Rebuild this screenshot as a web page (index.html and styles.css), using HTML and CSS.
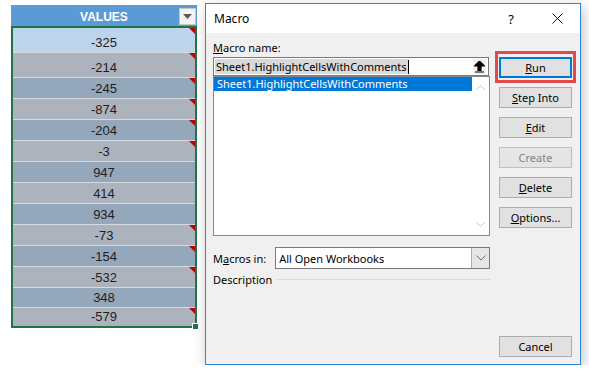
FILE: index.html
```html
<!DOCTYPE html>
<html lang="en">
<head>
  <meta charset="UTF-8">
  <title>Macro</title>
  <link rel="stylesheet" href="styles.css">
</head>
<body>
  <div class="screen">
    <!-- Planilha com os valores -->
    <div class="sheet">
      <div class="sheet-head">
        <span class="head-title">VALUES</span>
        <span class="filter-btn">
          <svg width="9" height="5" viewBox="0 0 9 5"><path d="M0 0h9L4.5 5z" fill="#595959"/></svg>
        </span>
      </div>
      <div class="sheet-body">
        <div class="cell active note" style="height:24px">-325</div>
        <div class="cell grey note" style="height:25px">-214</div>
        <div class="cell blue note">-245</div>
        <div class="cell grey note">-874</div>
        <div class="cell blue note">-204</div>
        <div class="cell grey note">-3</div>
        <div class="cell blue">947</div>
        <div class="cell grey">414</div>
        <div class="cell blue">934</div>
        <div class="cell grey note">-73</div>
        <div class="cell blue note">-154</div>
        <div class="cell grey note">-532</div>
        <div class="cell blue" style="height:20px">348</div>
        <div class="cell grey note" style="height:19px">-579</div>
        <span class="fill-handle"></span>
      </div>
    </div>

    <!-- Janela de macros -->
    <div class="dialog">
      <div class="titlebar">
        <span class="title">Macro</span>
        <span class="tb-btn">?</span>
        <span class="tb-btn">
          <svg width="11" height="11" viewBox="0 0 11 11"><path d="M0.5 0.5l10 10M10.5 0.5l-10 10" stroke="#111" stroke-width="1"/></svg>
        </span>
      </div>
      <div class="dialog-body">
        <div class="main-col">
          <div class="label"><u>M</u>acro name:</div>
          <div class="name-input">
            <span class="name-text">Sheet1.HighlightCellsWithComments</span><span class="caret"></span>
            <span class="up-btn">
              <svg width="11" height="12" viewBox="0 0 11 12"><path d="M5.5 0L10.5 5H7v4.5H4V5H0.5z M1 11h9" fill="#000" stroke="#000" stroke-width="1.2"/></svg>
            </span>
          </div>
          <div class="listbox">
            <div class="list-items">
              <div class="list-item selected">Sheet1.HighlightCellsWithComments</div>
            </div>
            <div class="scroll">
              <svg width="9" height="5" viewBox="0 0 9 5"><path d="M0.5 4.5L4.5 0.8L8.5 4.5" fill="none" stroke="#c4c4c4"/></svg>
              <svg width="9" height="5" viewBox="0 0 9 5"><path d="M0.5 0.5L4.5 4.2L8.5 0.5" fill="none" stroke="#c4c4c4"/></svg>
            </div>
          </div>
          <div class="macros-in">
            <span class="label">M<u>a</u>cros in:</span>
            <div class="select">
              <span class="select-text">All Open Workbooks</span>
              <span class="select-btn">
                <svg width="10" height="6" viewBox="0 0 10 6"><path d="M0.5 0.5L5 5L9.5 0.5" fill="none" stroke="#6d6d6d"/></svg>
              </span>
            </div>
          </div>
          <div class="desc">
            <span class="label">Description</span>
            <span class="desc-line"></span>
          </div>
        </div>
        <div class="btn-col">
          <button class="btn default highlight"><u>R</u>un</button>
          <button class="btn"><u>S</u>tep Into</button>
          <button class="btn"><u>E</u>dit</button>
          <button class="btn disabled">Create</button>
          <button class="btn"><u>D</u>elete</button>
          <button class="btn"><u>O</u>ptions...</button>
          <button class="btn cancel">Cancel</button>
        </div>
      </div>
    </div>
  </div>
</body>
</html>
```

FILE: styles.css
```css
/* Geral */
body {
  margin: 0;
  background: #fff;
  font-family: "Noto Sans", "DejaVu Sans", sans-serif;
  color: #000;
}
.screen {
  display: flex;
  align-items: flex-start;
  padding: 3px 0 0 11px;
}

/* Planilha */
.sheet {
  width: 186px;
  margin-top: 2px;
  font-family: "Liberation Sans", Arial, sans-serif;
}
.sheet-head {
  height: 21px;
  background: #5b9bd5;
  display: flex;
  align-items: center;
  position: relative;
}
.head-title {
  flex: 1;
  text-align: center;
  color: #fff;
  font-weight: bold;
  font-size: 12px;
  padding-top: 2px;
}
.filter-btn {
  position: absolute;
  right: 1px;
  top: 3px;
  width: 15px;
  height: 15px;
  background: #f3f3f3;
  border: 1px solid #c6c6c6;
  display: flex;
  align-items: center;
  justify-content: center;
}
.sheet-body {
  border: 2px solid #217346;
  position: relative;
}
.cell {
  height: 21px;
  box-sizing: border-box;
  display: flex;
  align-items: flex-end;
  justify-content: center;
  padding-bottom: 2px;
  font-size: 13px;
  line-height: 15px;
  color: #1e1e1e;
  border-top: 1px solid #d5dae2;
  position: relative;
}
.cell.active {
  background: #bdd5ec;
  border-top: none;
}
.cell.grey {
  background: #adb3bc;
}
.cell.blue {
  background: #95a7bb;
}
.note::after {
  content: "";
  position: absolute;
  top: 0;
  right: 0;
  border-top: 6px solid #c00000;
  border-left: 6px solid transparent;
}
.fill-handle {
  position: absolute;
  right: -4px;
  bottom: -4px;
  width: 5px;
  height: 5px;
  background: #217346;
  border: 1px solid #fff;
}

/* Janela */
.dialog {
  margin-left: 8px;
  width: 376px;
  height: 362px;
  box-sizing: border-box;
  border: 1px solid #2b88d8;
  background: #f0f0f0;
  box-shadow: 2px 4px 12px rgba(0,0,0,0.25);
  display: flex;
  flex-direction: column;
  font-size: 11px;
}
.titlebar {
  height: 29px;
  background: #fff;
  display: flex;
  align-items: center;
  padding-left: 8px;
}
.title {
  flex: 1;
  font-size: 12px;
}
.tb-btn {
  width: 46px;
  height: 29px;
  display: flex;
  align-items: center;
  justify-content: center;
  font-size: 13px;
}
.dialog-body {
  flex: 1;
  display: flex;
  gap: 9px;
  padding: 7px 7px 7px 7px;
}
.main-col {
  width: 277px;
  display: flex;
  flex-direction: column;
}
.label {
  line-height: 15px;
  color: #000;
}
.name-input {
  margin-top: 2px;
  height: 19px;
  box-sizing: border-box;
  border: 1px solid #7a7a7a;
  background: #fff;
  display: flex;
  align-items: center;
  padding-left: 1px;
  margin-right: 1px;
}
.name-text {
  background: #d9d9d9;
  line-height: 15px;
  padding: 0 1px;
}
.caret {
  width: 1px;
  height: 14px;
  background: #000;
}
.up-btn {
  margin-left: auto;
  margin-right: 2px;
  width: 13px;
  height: 15px;
  background: #f0f0f0;
  display: flex;
  align-items: center;
  justify-content: center;
}
.listbox {
  height: 160px;
  box-sizing: border-box;
  border: 1px solid #828790;
  background: #fff;
  display: flex;
}
.list-items {
  flex: 1;
}
.list-item {
  line-height: 14px;
  padding-left: 3px;
}
.list-item.selected {
  background: #0078d7;
  color: #fff;
}
.scroll {
  width: 17px;
  display: flex;
  flex-direction: column;
  justify-content: space-between;
  align-items: center;
  padding: 8px 0 8px;
}
.macros-in {
  margin-top: 11px;
  display: flex;
  align-items: center;
  gap: 9px;
}
.select {
  flex: 1;
  height: 22px;
  box-sizing: border-box;
  border: 1px solid #7a7a7a;
  background: #fff;
  display: flex;
  align-items: center;
}
.select-text {
  flex: 1;
  padding-left: 3px;
}
.select-btn {
  width: 17px;
  height: 20px;
  background: #e6e6e6;
  border-left: 1px solid #adadad;
  display: flex;
  align-items: center;
  justify-content: center;
}
.desc {
  margin-top: 3px;
  display: flex;
  align-items: center;
  gap: 4px;
}
.desc-line {
  flex: 1;
  height: 1px;
  background: #d9d9d9;
}

/* Botões */
.btn-col {
  width: 73px;
  display: flex;
  flex-direction: column;
  gap: 9px;
  padding-top: 17px;
}
.btn {
  height: 21px;
  box-sizing: border-box;
  border: 1px solid #adadad;
  background: #e1e1e1;
  font-family: inherit;
  font-size: 11px;
  color: #000;
  padding: 0;
}
.btn.default {
  border: 2px solid #0078d7;
}
.btn.disabled {
  color: #838383;
  border-color: #bfbfbf;
  background: #e5e5e5;
}
.btn.cancel {
  margin-top: auto;
}
.highlight {
  position: relative;
}
.highlight::after {
  content: "";
  position: absolute;
  top: -8px;
  bottom: -7px;
  left: -6px;
  right: -6px;
  border: 3px solid #e2494b;
}
```
